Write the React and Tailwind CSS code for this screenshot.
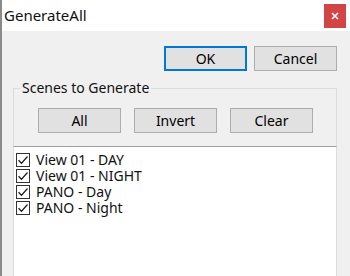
import React from 'react';

const scenes = ['View 01 - DAY', 'View 01 - NIGHT', 'PANO - Day', 'PANO - Night'];

const Btn = ({ label, primary, className = '' }) => (
    <button
        className={`h-[25px] w-[83px] bg-[#e1e1e1] text-[14px] text-black ${
            primary ? 'border-2 border-[#0078d7]' : 'border border-[#adadad]'
        } ${className}`}
    >
        {label}
    </button>
);

const Check = () => (
    <span className="w-[14px] h-[14px] border border-[#333] bg-white flex items-center justify-center shrink-0">
        <svg width="12" height="12" viewBox="0 0 12 12">
            <path d="M1.5 6.2 L4.5 9.2 L10.5 2.5" fill="none" stroke="#222" strokeWidth="1.3" />
        </svg>
    </span>
);

export default function App() {
    return (
        <div
            className="w-[350px] h-[276px] overflow-hidden bg-[#f0f0f0] border-l-2 border-[#8a8a8a] flex flex-col"
            style={{ fontFamily: '"Noto Sans", "Open Sans", sans-serif' }}
        >
            {/* Barra de título */}
            <div className="h-[31px] bg-white flex items-center justify-between shrink-0">
                <span className="pl-[2px] text-[15px] text-[#111]">GenerateAll</span>
                <div className="w-[22px] h-[24px] mr-[4px] mt-[1px] bg-[#d24545] flex items-center justify-center">
                    <svg width="8" height="8" viewBox="0 0 8 8">
                        <path d="M1 1 L7 7 M7 1 L1 7" stroke="white" strokeWidth="1.6" />
                    </svg>
                </div>
            </div>

            {/* Botones OK / Cancel */}
            <div className="flex justify-end gap-[7px] pr-[13px] pt-[15px]">
                <Btn label="OK" primary />
                <Btn label="Cancel" />
            </div>

            {/* Grupo de escenas */}
            <div className="mt-[17px] ml-[11px] mr-[13px] border border-b-0 border-[#dcdcdc] h-[58px] relative">
                <span className="absolute -top-[11px] left-[6px] px-[2px] bg-[#f0f0f0] text-[14px] leading-[20px] text-[#111]">
                    Scenes to Generate
                </span>
                <div className="flex gap-[13px] pl-[24px] pt-[19px]">
                    <Btn label="All" />
                    <Btn label="Invert" />
                    <Btn label="Clear" />
                </div>
            </div>

            {/* Lista */}
            <div className="flex-1 ml-[11px] mr-[13px] bg-white border-t border-[#a0a0a0] border-l border-r border-l-[#dcdcdc] border-r-[#dcdcdc] pt-[5px] pl-[2px]">
                {scenes.map((s) => (
                    <div key={s} className="flex items-center gap-[6px] h-[16px]">
                        <Check />
                        <span className="text-[14px] text-[#111] leading-[16px]">{s}</span>
                    </div>
                ))}
            </div>
        </div>
    );
}
